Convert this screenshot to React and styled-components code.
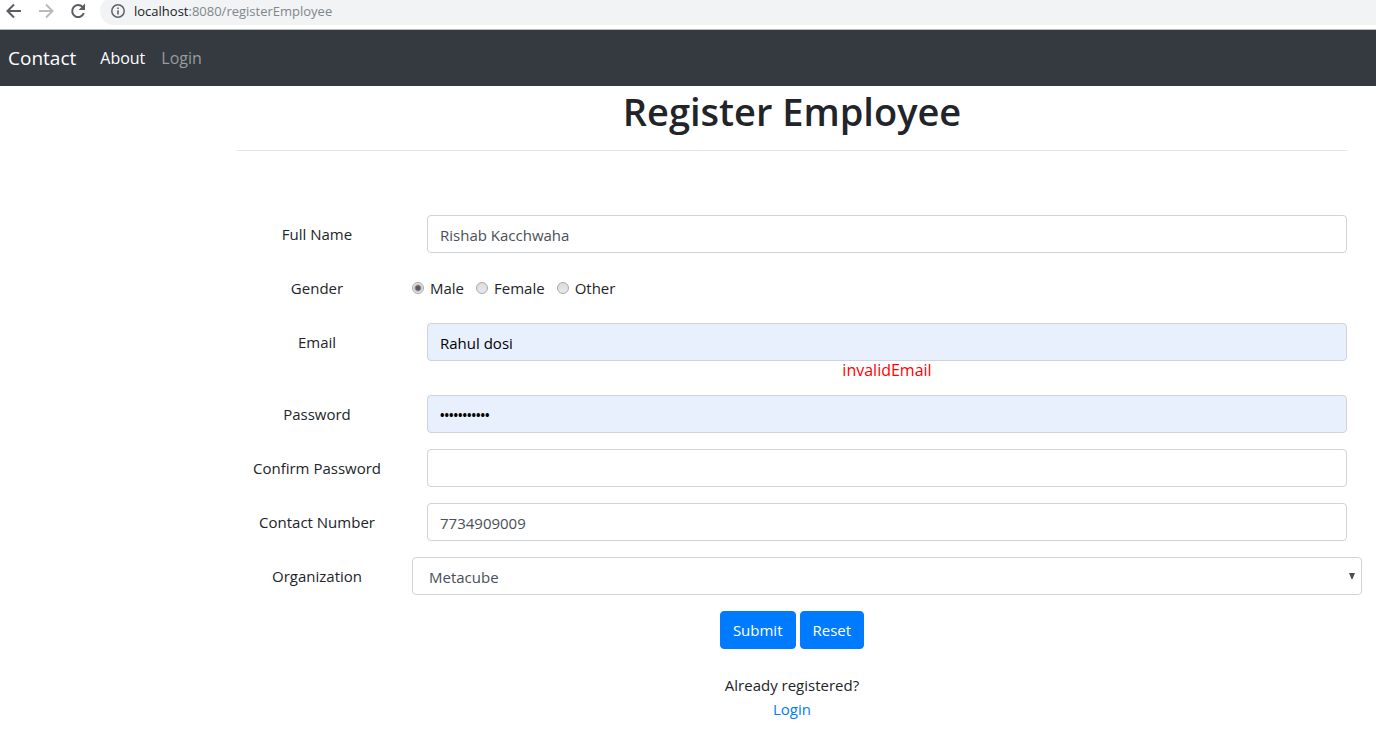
import React from "react";
import styled, { createGlobalStyle } from "styled-components";

const GlobalStyle = createGlobalStyle`
  *, *::before, *::after { box-sizing: border-box; }
  body {
    margin: 0;
    background: #fff;
    color: #212529;
    font-family: "Open Sans", "Noto Sans", sans-serif;
    font-size: 15px;
    line-height: 24px;
  }
  input, select, button { font-family: inherit; }
`;

const BrowserBar = styled.header`
  display: flex;
  align-items: flex-end;
  height: 30px;
  padding-bottom: 4px;
  overflow: hidden;
  border-bottom: 1px solid #b4bab7;
`;

const BrowserButtons = styled.div`
  display: flex;
  align-items: center;
  gap: 12px;
  width: 100px;
  height: 28px;
  padding-left: 4px;
  flex: none;
`;

const IconButton = styled.button`
  display: flex;
  width: 20px;
  height: 20px;
  padding: 0;
  border: 0;
  background: none;
  color: ${(p) => (p.disabled ? "#bababa" : "#5a5d61")};
`;

const AddressBar = styled.div`
  display: flex;
  align-items: center;
  gap: 8px;
  flex: 1;
  height: 28px;
  padding-left: 10px;
  border-radius: 14px 0 0 14px;
  background: #f1f3f4;
  color: #80868b;
  font-size: 13px;
`;

const Host = styled.span`
  color: #202124;
`;

const Nav = styled.nav`
  display: flex;
  align-items: center;
  gap: 16px;
  height: 56px;
  padding: 0 8px;
  background: #343a40;
`;

const Brand = styled.a`
  margin-right: 8px;
  color: #fff;
  font-size: 19px;
  text-decoration: none;
`;

const NavLink = styled.a`
  color: ${(p) => (p.$active ? "#fff" : "#999c9f")};
  font-size: 16px;
  text-decoration: none;
`;

const Main = styled.main`
  max-width: 1140px;
  margin: 0 14px 0 auto;
  text-align: center;
`;

const Title = styled.h1`
  margin: 0 15px;
  padding: 1px 0 15px;
  border-bottom: 1px solid #e5e5e5;
  font-size: 38px;
  font-weight: 600;
  line-height: 48px;
`;

const Form = styled.form`
  padding-top: 64px;
`;

const Row = styled.div`
  display: grid;
  grid-template-columns: 1fr 5fr;
  margin-bottom: 16px;
`;

const RowLabel = styled.label`
  line-height: 38px;
`;

const Field = styled.div`
  padding: 0 15px;
`;

const TextInput = styled.input`
  display: block;
  width: 100%;
  height: 38px;
  padding: 2px 12px 0;
  border: 1px solid #ced4da;
  border-radius: 4px;
  background: ${(p) => (p.$filled ? "#e8f0fe" : "#fff")};
  color: ${(p) => (p.$filled ? "#000" : "#495057")};
  font-size: ${(p) => (p.type === "password" ? "12px" : "15px")};
  font-weight: ${(p) => (p.type === "password" ? 700 : 400)};
`;

const ErrorText = styled.div`
  color: #f00;
  font-size: 16px;
  line-height: 18px;
`;

const RadioGroup = styled.div`
  display: flex;
  align-items: center;
  gap: 12px;
  height: 38px;
`;

const RadioLabel = styled.label`
  display: flex;
  align-items: center;
  gap: 6px;
`;

const Radio = styled.input`
  appearance: none;
  width: 12px;
  height: 12px;
  margin: 0;
  border: 1px solid #a9a9a9;
  border-radius: 50%;
  background: linear-gradient(#dcdcdc, #e8e8e8);
  &:checked {
    background: radial-gradient(circle, #5a5a5a 0 2px, #e3e3e3 4px);
  }
`;

const SelectWrap = styled.div`
  display: grid;
  align-items: center;
`;

const Select = styled.select`
  grid-area: 1 / 1;
  appearance: none;
  width: 100%;
  height: 38px;
  padding: 2px 16px 0;
  border: 1px solid #ced4da;
  border-radius: 4px;
  background: #fff;
  color: #495057;
  font-size: 15px;
`;

const Caret = styled.svg`
  grid-area: 1 / 1;
  justify-self: end;
  margin-right: 7px;
  pointer-events: none;
`;

const Actions = styled.div`
  display: flex;
  justify-content: center;
  gap: 4px;
`;

const Button = styled.button`
  height: 38px;
  padding: 0 12px;
  border: 1px solid #007bff;
  border-radius: 4px;
  background: #007bff;
  color: #fff;
  font-size: 15px;
`;

const Footer = styled.p`
  display: flex;
  flex-direction: column;
  align-items: center;
  margin: 24px 0;
`;

const Link = styled.a`
  color: #007bff;
  text-decoration: none;
`;

const TextRow = ({ id, label, error, ...rest }) => (
  <Row>
    <RowLabel htmlFor={id}>{label}</RowLabel>
    <Field>
      <TextInput id={id} {...rest} />
      {error && <ErrorText>{error}</ErrorText>}
    </Field>
  </Row>
);

const ArrowIcon = ({ flip }) => (
  <svg width="20" height="20" viewBox="0 0 20 20" fill="none" stroke="currentColor" strokeWidth="2">
    <path d={flip ? "M3 10H16M10 3.5L16.5 10L10 16.5" : "M17 10H4M10 3.5L3.5 10L10 16.5"} />
  </svg>
);

export default function App() {
  return (
    <>
      <GlobalStyle />
      <BrowserBar>
        <BrowserButtons>
          <IconButton aria-label="Back"><ArrowIcon /></IconButton>
          <IconButton aria-label="Forward" disabled><ArrowIcon flip /></IconButton>
          <IconButton aria-label="Reload">
            <svg width="20" height="20" viewBox="0 0 20 20">
              <path d="M15.8 12.2A6 6 0 1 1 14.6 6" fill="none" stroke="currentColor" strokeWidth="2" />
              <path d="M17 2.6V9H10.6Z" fill="currentColor" />
            </svg>
          </IconButton>
        </BrowserButtons>
        <AddressBar>
          <svg width="16" height="16" viewBox="0 0 16 16" fill="none" stroke="#5f6368">
            <circle cx="8" cy="8" r="6.2" strokeWidth="1.5" />
            <path d="M8 7.2V11.5M8 4.5V6" strokeWidth="1.6" />
          </svg>
          <span><Host>localhost</Host>:8080/registerEmployee</span>
        </AddressBar>
      </BrowserBar>
      <Nav>
        <Brand href="#contact">Contact</Brand>
        <NavLink href="#about" $active>About</NavLink>
        <NavLink href="#login">Login</NavLink>
      </Nav>
      <Main>
        <Title>Register Employee</Title>
        <Form onSubmit={(e) => e.preventDefault()}>
          <TextRow id="name" label="Full Name" defaultValue="Rishab Kacchwaha" />
          <Row role="radiogroup" aria-labelledby="gender">
            <RowLabel as="span" id="gender">Gender</RowLabel>
            <RadioGroup>
              {["Male", "Female", "Other"].map((g) => (
                <RadioLabel key={g}>
                  <Radio type="radio" name="gender" value={g} defaultChecked={g === "Male"} />
                  {g}
                </RadioLabel>
              ))}
            </RadioGroup>
          </Row>
          <TextRow id="email" label="Email" defaultValue="Rahul dosi" error="invalidEmail" $filled />
          <TextRow id="password" label="Password" type="password" defaultValue="abcdefghijk" $filled />
          <TextRow id="confirm" label="Confirm Password" type="password" />
          <TextRow id="contact" label="Contact Number" type="tel" defaultValue="7734909009" />
          <Row>
            <RowLabel htmlFor="organization">Organization</RowLabel>
            <SelectWrap>
              <Select id="organization">
                <option>Metacube</option>
              </Select>
              <Caret width="6" height="6" viewBox="0 0 6 6" aria-hidden="true">
                <path d="M0 0H6L3.5 6H2.5Z" fill="#495057" />
              </Caret>
            </SelectWrap>
          </Row>
          <Actions>
            <Button type="submit">Submit</Button>
            <Button type="reset">Reset</Button>
          </Actions>
        </Form>
        <Footer>
          Already registered?
          <Link href="#login">Login</Link>
        </Footer>
      </Main>
    </>
  );
}
